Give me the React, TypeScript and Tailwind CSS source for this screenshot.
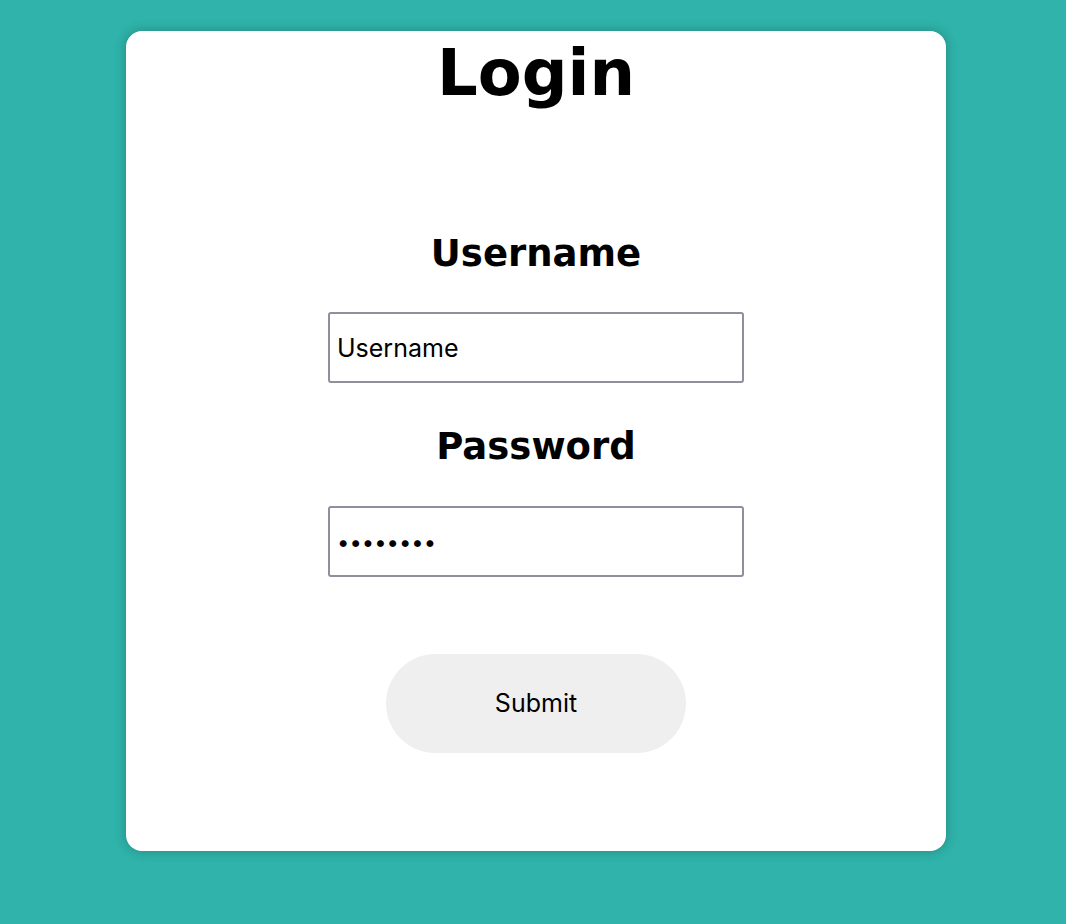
import { useState } from "react";

export default function App() {
  const [username, setUsername] = useState("");
  const [password, setPassword] = useState("password");

  return (
    <div className="flex min-h-[924px] justify-center bg-[#2fb3aa] pl-[6px] pt-[31px]">
      <form
        onSubmit={(e) => e.preventDefault()}
        className="flex h-[820px] w-[820px] flex-col items-center rounded-[16px] bg-white pt-[10px] shadow-[0_0_12px_rgba(0,0,0,0.25)]"
      >
        <h1 className="font-['DejaVu_Sans',Verdana,sans-serif] text-[64px] leading-none font-bold text-black">Login</h1>

        <h2 className="mt-[130px] font-['DejaVu_Sans',Verdana,sans-serif] text-[37px] leading-none font-bold text-black">
          Username
        </h2>
        <input
          type="text"
          placeholder="Username"
          value={username}
          onChange={(e) => setUsername(e.target.value)}
          className="mt-[40px] h-[71px] w-[416px] rounded-[3px] border-2 border-[#8f8f9d] bg-white pl-[7px] font-['Inter',sans-serif] text-[25px] text-black outline-none placeholder:text-black"
        />

        <h2 className="mt-[45px] font-['DejaVu_Sans',Verdana,sans-serif] text-[37px] leading-none font-bold text-black">
          Password
        </h2>
        <input
          type="password"
          value={password}
          onChange={(e) => setPassword(e.target.value)}
          className="mt-[41px] h-[71px] w-[416px] rounded-[3px] border-2 border-[#8f8f9d] bg-white pl-[7px] font-['Inter',sans-serif] text-[22px] text-black outline-none"
        />

        <button
          type="submit"
          className="mt-[77px] h-[99px] w-[300px] rounded-full bg-[#efefef] font-['Inter',sans-serif] text-[25px] text-black"
        >
          Submit
        </button>
      </form>
    </div>
  );
}
